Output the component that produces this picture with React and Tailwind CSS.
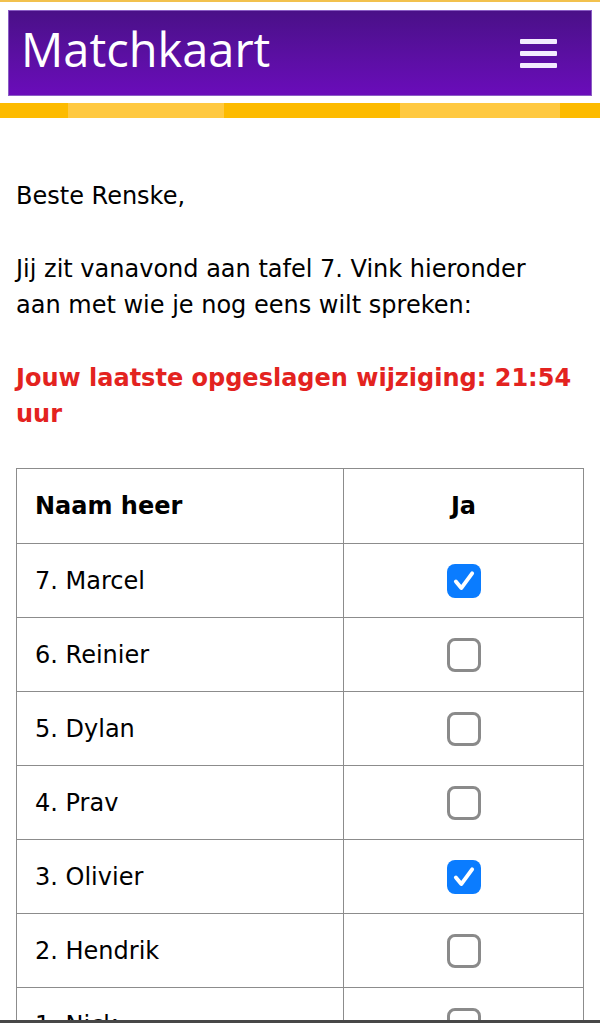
import React from "react";

const heren = [
  { naam: "7. Marcel", ja: true },
  { naam: "6. Reinier", ja: false },
  { naam: "5. Dylan", ja: false },
  { naam: "4. Prav", ja: false },
  { naam: "3. Olivier", ja: true },
  { naam: "2. Hendrik", ja: false },
  { naam: "1. Nick", ja: false },
];

function Vinkje({ checked }) {
  if (checked) {
    return (
      <span className="inline-flex w-[34px] h-[34px] items-center justify-center rounded-[8px] bg-[#0a7cff]">
        <svg width="26" height="26" viewBox="0 0 24 24" fill="none">
          <path d="M4.5 12.5l5 6L19.5 5" stroke="white" strokeWidth="3.6" strokeLinecap="round" strokeLinejoin="round" />
        </svg>
      </span>
    );
  }
  return <span className="inline-block w-[34px] h-[34px] rounded-[8px] border-[3px] border-[#8a8a8a] bg-white" />;
}

function Header() {
  return (
    <div>
      <div className="h-[2px] bg-[#f2c14e]" />
      <div className="px-2 pt-2 pb-[7px]">
        <div className="flex items-center justify-between h-[86px] pl-[12px] pr-[34px] bg-gradient-to-b from-[#4a1088] to-[#6a0cba] border border-[#8a5cc4]">
          <span className="text-[47px] leading-none text-white font-['Open_Sans',sans-serif] -mt-[8px]">Matchkaart</span>
          <div className="flex flex-col gap-[7px]">
            <span className="block w-[37px] h-[5px] bg-[#f3ecff] rounded-[1px]" />
            <span className="block w-[37px] h-[5px] bg-[#f3ecff] rounded-[1px]" />
            <span className="block w-[37px] h-[5px] bg-[#f3ecff] rounded-[1px]" />
          </div>
        </div>
      </div>
      <div className="flex h-[15px]">
        <div className="w-[68px] bg-[#fdbb00]" />
        <div className="w-[156px] bg-[#ffc941]" />
        <div className="w-[176px] bg-[#fdbb00]" />
        <div className="w-[160px] bg-[#ffc941]" />
        <div className="flex-1 bg-[#fdbb00]" />
      </div>
    </div>
  );
}

export default function App() {
  return (
    <div className="min-h-screen bg-white font-['DejaVu_Sans',sans-serif] text-[24px] leading-[36px] text-black">
      <Header />
      <div className="px-4 pt-[60px]">
        <p>Beste Renske,</p>
        <p className="mt-[37px] pr-[14px]">Jij zit vanavond aan tafel 7. Vink hieronder aan met wie je nog eens wilt spreken:</p>
        <p className="mt-[37px] font-bold text-[#e3231f] -mr-[4px]">Jouw laatste opgeslagen wijziging: 21:54 uur</p>
        <table className="mt-[36px] w-[568px] border-collapse">
          <thead>
            <tr className="h-[75px]">
              <th className="border border-[#8c8c8c] text-left pl-[18px] font-bold w-[327px]">Naam heer</th>
              <th className="border border-[#8c8c8c] text-center font-bold">Ja</th>
            </tr>
          </thead>
          <tbody>
            {heren.map((h) => (
              <tr key={h.naam} className="h-[74px]">
                <td className="border border-[#8c8c8c] pl-[18px]">{h.naam}</td>
                <td className="border border-[#8c8c8c] text-center align-middle">
                  <div className="flex justify-center">
                    <Vinkje checked={h.ja} />
                  </div>
                </td>
              </tr>
            ))}
          </tbody>
        </table>
      </div>
      <div className="fixed bottom-0 left-0 right-0 h-[3px] bg-[#474747]" />
    </div>
  );
}
